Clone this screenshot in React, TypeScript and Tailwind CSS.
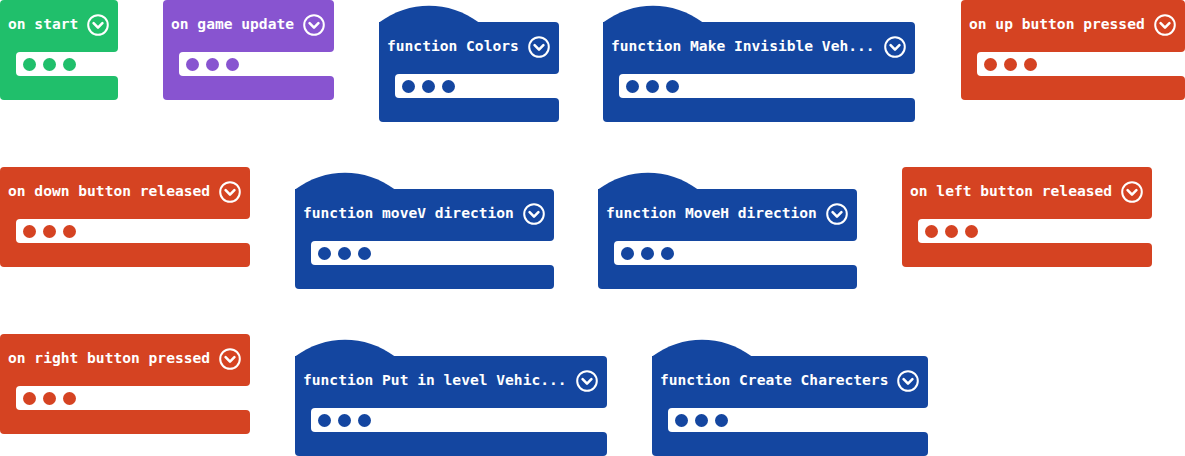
type Tone = 'green' | 'purple' | 'red' | 'blue'

const fill: Record<Tone, string> = {
  green: 'bg-[#20bf6b]',
  purple: 'bg-[#8854d0]',
  red: 'bg-[#d54322]',
  blue: 'bg-[#1446a0]',
}

const hex: Record<Tone, string> = {
  green: '#20bf6b',
  purple: '#8854d0',
  red: '#d54322',
  blue: '#1446a0',
}

interface BlockProps {
  label: string
  tone: Tone
  pos: string
  hat?: boolean
}

function Chevron() {
  return (
    <svg width="22" height="22" viewBox="0 0 22 22" className="ml-[9px] shrink-0">
      <circle cx="11" cy="11" r="9.8" fill="none" stroke="white" strokeWidth="2" />
      <path d="M6.6 9.2 L11 13.6 L15.4 9.2" fill="none" stroke="white" strokeWidth="2.6" strokeLinecap="round" strokeLinejoin="round" />
    </svg>
  )
}

function Block({ label, tone, pos, hat }: BlockProps) {
  const bg = fill[tone]
  return (
    <div className={`absolute flex flex-col ${pos}`}>
      {hat && (
        <svg width="100" height="18" viewBox="0 0 100 18" className="absolute left-0 top-[-17px]">
          <path d="M0 18 L0 17.5 C 30 -5 70 -5 100 17.5 L100 18 Z" fill={hex[tone]} />
        </svg>
      )}
      <div className={`flex items-center h-[52px] pl-2 pr-[9px] pb-[3px] ${bg} ${hat ? 'rounded-tr-[4px]' : 'rounded-t-[4px]'} rounded-br-[4px]`}>
        <span className="font-['DejaVu_Sans_Mono',monospace] font-bold text-[14.6px] leading-none text-white whitespace-pre">
          {label}
        </span>
        <Chevron />
      </div>
      <div className={`flex h-6 ${bg}`}>
        <div className="w-4 shrink-0" />
        <div className="flex flex-1 items-center gap-[7px] pl-[7px] bg-white rounded-l-[4px]">
          <div className={`w-[13px] h-[13px] rounded-full ${bg}`} />
          <div className={`w-[13px] h-[13px] rounded-full ${bg}`} />
          <div className={`w-[13px] h-[13px] rounded-full ${bg}`} />
        </div>
      </div>
      <div className={`h-6 ${bg} rounded-b-[4px] rounded-tr-[4px]`} />
    </div>
  )
}

export default function App() {
  return (
    <div className="relative w-[1185px] h-[456px] overflow-hidden bg-white">
      <Block label="on start" tone="green" pos="left-0 top-0" />
      <Block label="on game update" tone="purple" pos="left-[163px] top-0" />
      <Block label="function Colors" tone="blue" pos="left-[379px] top-[22px]" hat />
      <Block label="function Make Invisible Veh..." tone="blue" pos="left-[603px] top-[22px]" hat />
      <Block label="on up button pressed" tone="red" pos="left-[961px] top-0" />

      <Block label="on down button released" tone="red" pos="left-0 top-[167px]" />
      <Block label="function moveV direction" tone="blue" pos="left-[295px] top-[189px]" hat />
      <Block label="function MoveH direction" tone="blue" pos="left-[598px] top-[189px]" hat />
      <Block label="on left button released" tone="red" pos="left-[902px] top-[167px]" />

      <Block label="on right button pressed" tone="red" pos="left-0 top-[334px]" />
      <Block label="function Put in level Vehic..." tone="blue" pos="left-[295px] top-[356px]" hat />
      <Block label="function Create Charecters" tone="blue" pos="left-[652px] top-[356px]" hat />
    </div>
  )
}
